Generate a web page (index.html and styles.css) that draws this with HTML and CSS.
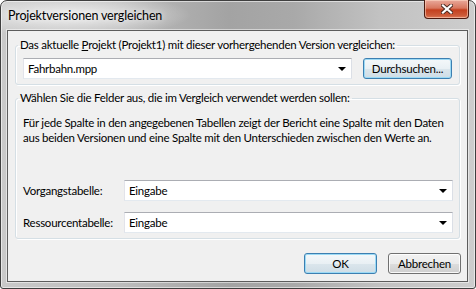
FILE: index.html
```html
<!DOCTYPE html>
<html lang="de">
<head>
<meta charset="utf-8">
<title>Projektversionen vergleichen</title>
<link rel="stylesheet" href="styles.css">
</head>
<body>
<div class="window">
  <div class="titlebar">
    <span class="title">Projektversionen vergleichen</span>
    <button class="close" aria-label="Schließen">
      <svg width="12" height="10" viewBox="0 0 12 10">
        <path d="M2 1.5 L10 8.5 M10 1.5 L2 8.5" stroke="#4a2a22" stroke-width="4" stroke-linecap="square"/>
        <path d="M2 1.5 L10 8.5 M10 1.5 L2 8.5" stroke="#ffffff" stroke-width="2.2" stroke-linecap="square"/>
      </svg>
    </button>
  </div>
  <div class="client">
    <fieldset class="group g1">
      <legend>Das aktuelle <u>P</u>rojekt (Projekt1) mit dieser vorhergehenden Version vergleichen:</legend>
      <div class="filerow">
        <div class="combo grow"><span>Fahrbahn.mpp</span><i class="arrow"></i></div>
        <button class="btn blue browse">Durchsuchen...</button>
      </div>
    </fieldset>
    <fieldset class="group g2">
      <legend>Wählen Sie die Felder aus, die im Vergleich verwendet werden sollen:</legend>
      <p class="desc">Für jede Spalte in den angegebenen Tabellen zeigt der Bericht eine Spalte mit den Daten<br>aus beiden Versionen und eine Spalte mit den Unterschieden zwischen den Werte an.</p>
      <div class="fields">
        <div class="field">
          <label class="flabel">Vorgangstabelle:</label>
          <div class="combo grow"><span>Eingabe</span><i class="arrow"></i></div>
        </div>
        <div class="field">
          <label class="flabel">Ressourcentabelle:</label>
          <div class="combo grow"><span>Eingabe</span><i class="arrow"></i></div>
        </div>
      </div>
    </fieldset>
    <div class="actions">
      <button class="btn blue">OK</button>
      <button class="btn">Abbrechen</button>
    </div>
  </div>
</div>
</body>
</html>
```
FILE: styles.css
```css
* { box-sizing: border-box; }
html, body { margin: 0; padding: 0; }
body {
  width: 476px;
  height: 289px;
  overflow: hidden;
  background: #ffffff;
  font-family: "Lato", "Noto Sans", sans-serif;
  font-size: 11.5px;
  letter-spacing: -0.25px;
  color: #000;
}
.window {
  width: 476px;
  height: 289px;
  border: 1px solid #3f3f3f;
  border-radius: 7px 7px 3px 3px;
  padding: 0 7px 6px 6px;
  display: flex;
  flex-direction: column;
  background:
    radial-gradient(ellipse 120px 22px at 70px 14px, rgba(255,255,255,0.75), rgba(255,255,255,0) 100%),
    linear-gradient(to right, #c9c9c9 0%, #bcbcbc 25%, #a3a3a3 48%, #a9a9a9 62%, #c2c2c2 80%, #cdcdcd 100%);
  box-shadow: inset 0 0 0 1px rgba(255,255,255,0.55);
}
.titlebar {
  height: 29px;
  display: flex;
  align-items: flex-start;
  justify-content: space-between;
}
.title {
  margin-top: 7px;
  margin-left: 1px;
  font-size: 12.5px;
  letter-spacing: -0.15px;
  line-height: 16px;
  color: #000;
  text-shadow: 0 0 6px rgba(255,255,255,0.9);
}
.close {
  margin-top: -1px;
  margin-right: -1px;
  width: 45px;
  height: 19px;
  padding: 0;
  border: 1px solid #4b1a10;
  border-top: none;
  border-radius: 0 0 4px 4px;
  background: linear-gradient(to bottom, #e9a99b 0%, #d8775f 45%, #c4401f 55%, #cc5a38 85%, #e07a5a 100%);
  box-shadow: inset 0 0 0 1px rgba(255,220,200,0.55);
  display: flex;
  align-items: center;
  justify-content: center;
}
.close svg { display: block; }
.client {
  flex: 1;
  min-height: 0;
  border: 1px solid #5c5c5c;
  background: #f0f0f0;
  box-shadow: 0 0 0 1px rgba(255,255,255,0.5);
  display: flex;
  flex-direction: column;
}
.group {
  margin: 0 7px 0 7px;
  border: 1px solid #d5dfe5;
  border-radius: 3px;
  box-shadow: inset 1px 1px 0 #fff, 1px 1px 0 #fff;
  min-width: 0;
}
.group legend {
  padding: 0 2px;
  margin-left: -5px;
  line-height: 16px;
  white-space: nowrap;
}
.g1 { margin-top: 6px; padding: 5px 7px 5px 7px; }
.g2 { margin-top: 5px; padding: 9px 6px 5px 7px; }
.filerow {
  display: flex;
  gap: 11px;
}
.combo {
  height: 21px;
  background: #fff;
  border: 1px solid #abadb3;
  border-right-color: #dbdfe6;
  border-bottom-color: #e3e9ef;
  border-left-color: #e2e3ea;
  display: flex;
  align-items: center;
  padding: 0 5px 0 4px;
}
.combo span { flex: 1; line-height: 16px; }
.grow { flex: 1; }
.arrow {
  width: 0;
  height: 0;
  border-left: 4px solid transparent;
  border-right: 4px solid transparent;
  border-top: 4px solid #000;
}
.btn {
  font: inherit;
  letter-spacing: inherit;
  color: #000;
  height: 21px;
  width: 73px;
  padding: 0;
  border: 1px solid #707070;
  border-radius: 3px;
  background: linear-gradient(to bottom, #f2f2f2 0%, #ebebeb 50%, #dddddd 51%, #cfcfcf 100%);
  box-shadow: inset 0 0 0 1px rgba(255,255,255,0.85);
  line-height: 16px;
}
.btn.blue {
  border-color: #3c7fb1;
  background: linear-gradient(to bottom, #f4f8fa 0%, #e9f0f4 50%, #dbe6ec 51%, #cfdde6 100%);
  box-shadow: inset 0 0 0 1px #9cdaf5;
}
.browse { width: 89px; }
.desc {
  margin: 0;
  line-height: 15px;
  white-space: nowrap;
}
.fields {
  margin-top: 35px;
  display: flex;
  flex-direction: column;
  gap: 11px;
}
.field {
  display: flex;
  align-items: center;
}
.flabel { width: 101px; line-height: 16px; }
.actions {
  margin-top: 14px;
  padding-right: 6px;
  display: flex;
  justify-content: flex-end;
  gap: 11px;
}
```
